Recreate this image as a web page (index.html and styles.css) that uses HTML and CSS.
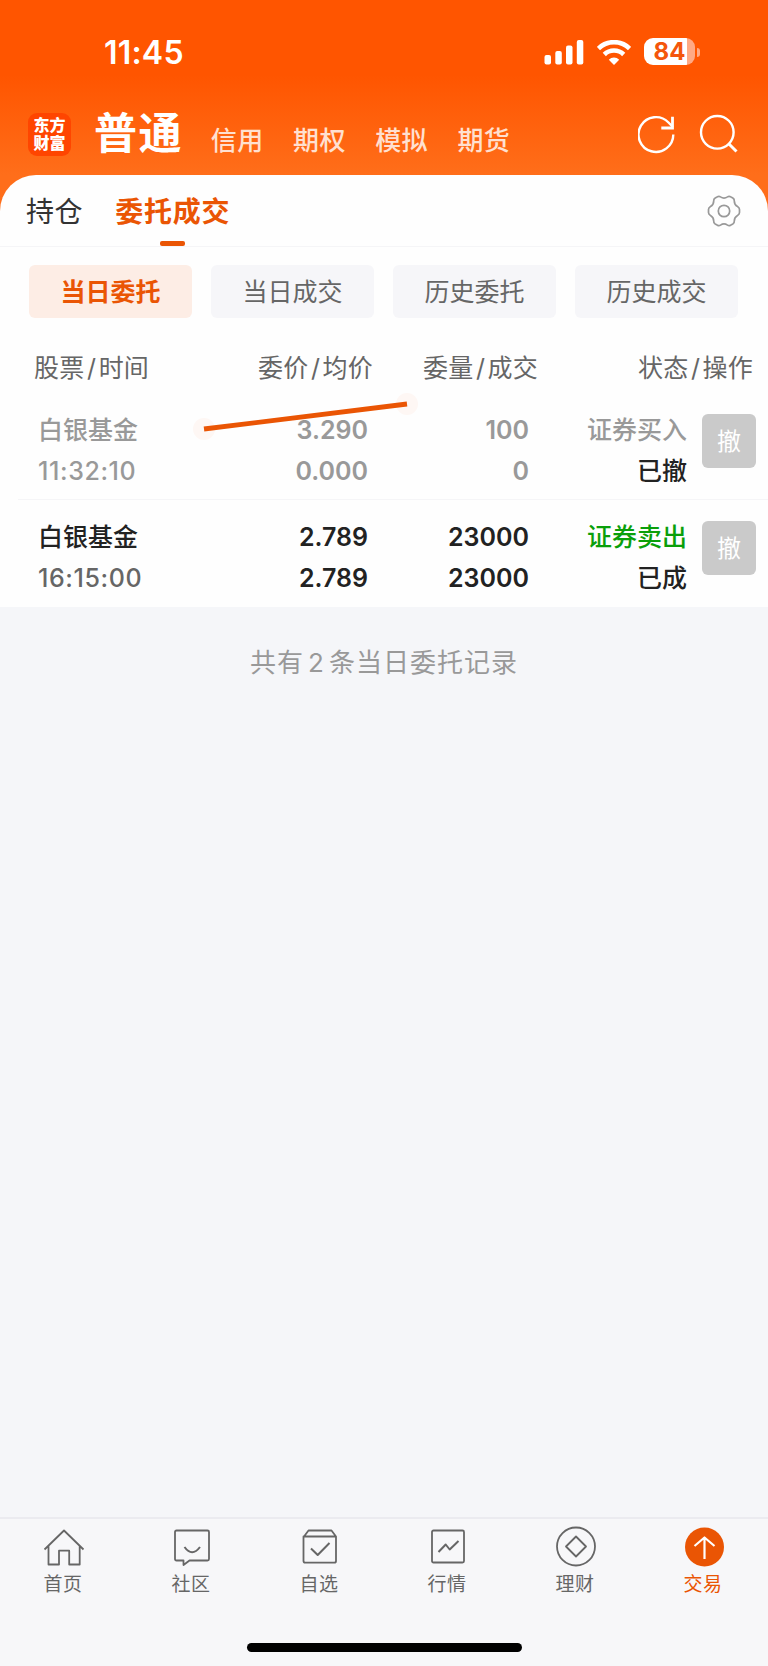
FILE: index.html
```html
<!DOCTYPE html>
<html lang="zh-CN">
<head>
    <meta charset="UTF-8">
    <meta name="viewport" content="width=device-width, initial-scale=1.0">
    <title>委托成交</title>
    <link rel="stylesheet" href="styles.css">
</head>
<body>
    <div class="page">
        <div class="top">
            <div class="status-bar">
                <span class="time">11:45</span>
                <div class="status-icons">
                    <svg class="signal" width="40" height="25" viewBox="0 0 40 25" fill="#fff">
                        <rect x="0.5" y="15" width="6.5" height="9.5" rx="2"/>
                        <rect x="11.3" y="11" width="6.5" height="13.5" rx="2"/>
                        <rect x="22" y="5.5" width="6.5" height="19" rx="2"/>
                        <rect x="32.8" y="0" width="6.5" height="24.5" rx="2"/>
                    </svg>
                    <svg class="wifi" width="34" height="25" viewBox="0 0 34 25" fill="none" stroke="#fff" stroke-width="4.6">
                        <path d="M1.4 8.5a22.3 22.3 0 0 1 31.2 0"/>
                        <path d="M7.3 14.5a13.9 13.9 0 0 1 19.4 0"/>
                        <path d="M17 25l-5.2-5.3a7.4 7.4 0 0 1 10.4 0z" fill="#fff" stroke="none"/>
                    </svg>
                    <div class="battery"><span>84</span></div>
                    <i class="battery-tip"></i>
                </div>
            </div>
            <div class="nav">
                <div class="logo">东方<br>财富</div>
                <h1>普通</h1>
                <div class="nav-links">
                    <span>信用</span>
                    <span>期权</span>
                    <span>模拟</span>
                    <span>期货</span>
                </div>
                <svg class="nav-icons" width="102" height="42" viewBox="0 0 102 42" fill="none" stroke="#fff" stroke-width="2.4">
                    <path d="M35.3 21.5A17.4 17.4 0 1 1 30.500 9.500L34.800 14"/>
                    <path d="M34.500 3.800v11.200H23.300" stroke-width="2.8"/>
                    <circle cx="79.3" cy="19.3" r="16.3"/>
                    <path d="M90.500 30.500l8 8" stroke-width="3"/>
                </svg>
            </div>
        </div>

        <div class="card">
            <div class="tabs">
                <span class="tab">持仓</span>
                <span class="tab active">委托成交</span>
                <svg class="gear" width="36" height="36" viewBox="-18 -18 36 36" fill="none" stroke="#999" stroke-width="1.7" stroke-linejoin="round">
                    <path d="M-6.500 -14.200Q-5 -15.200 -3.500 -14.100Q0 -11.800 3.500 -14.100Q5 -15.200 6.500 -14.200L8.800 -13Q10.500 -12 10.300 -10Q10.300 -6.200 13.500 -4.400Q15.500 -3.200 15.500 -1.500V1.500Q15.500 3.200 13.500 4.400Q10.300 6.200 10.300 10Q10.500 12 8.800 13L6.500 14.200Q5 15.200 3.500 14.100Q0 11.800 -3.500 14.100Q-5 15.200 -6.500 14.200L-8.800 13Q-10.500 12 -10.300 10Q-10.300 6.200 -13.500 4.400Q-15.500 3.200 -15.500 1.500V-1.500Q-15.500 -3.200 -13.500 -4.400Q-10.300 -6.200 -10.300 -10Q-10.500 -12 -8.800 -13Z"/>
                    <circle r="5.700"/>
                </svg>
            </div>

            <div class="filters">
                <button class="active">当日委托</button>
                <button>当日成交</button>
                <button>历史委托</button>
                <button>历史成交</button>
            </div>

            <div class="table-head">
                <span>股票<i>/</i>时间</span>
                <span>委价<i>/</i>均价</span>
                <span>委量<i>/</i>成交</span>
                <span>状态<i>/</i>操作</span>
            </div>

            <div class="orders">
                <div class="order cancelled">
                    <div class="cell stock"><b>白银基金</b><span class="clock">11:32:10</span></div>
                    <div class="cell"><b>3.290</b><b>0.000</b></div>
                    <div class="cell"><b>100</b><b>0</b></div>
                    <div class="cell state"><b>证券买入</b><b class="result">已撤</b></div>
                    <button>撤</button>
                </div>
                <div class="order">
                    <div class="cell stock"><b>白银基金</b><span class="clock">16:15:00</span></div>
                    <div class="cell"><b>2.789</b><b>2.789</b></div>
                    <div class="cell"><b>23000</b><b>23000</b></div>
                    <div class="cell state"><b class="sell">证券卖出</b><b class="result">已成</b></div>
                    <button>撤</button>
                </div>
                <!-- line drawn over the first order -->
                <svg class="mark" width="240" height="60" viewBox="0 0 240 60">
                    <circle cx="14" cy="43" r="11" fill="#fef7f4"/>
                    <circle cx="217" cy="18" r="11" fill="#fef7f4"/>
                    <path d="M14 43L217 18" stroke="#ea5504" stroke-width="4.8"/>
                </svg>
            </div>
        </div>

        <p class="summary">共有<span>2</span>条当日委托记录</p>

        <div class="tabbar">
            <div class="item">
                <svg width="42" height="42" viewBox="0 0 42 42">
                    <path d="M1.5 22.5L21 3.5l19.5 19M5.5 19v18.5H16V23.7h10.2v13.8h10.5V19"/>
                </svg>
                <span>首页</span>
            </div>
            <div class="item">
                <svg width="42" height="42" viewBox="0 0 42 42">
                    <path d="M5.5 3.5h31q1.5 0 1.5 1.5v27q0 1.5-1.5 1.5H18.500l-6 4.500v-4.500h-7Q4 33.500 4 32V5q0-1.500 1.500-1.500z"/>
                    <path d="M13.500 20q7.500 10.500 15.500 0" stroke-width="2"/>
                </svg>
                <span>社区</span>
            </div>
            <div class="item">
                <svg width="42" height="42" viewBox="0 0 42 42">
                    <path d="M5 9.500L9.500 3.500h23L37 9.500V34q0 1.700-1.700 1.700H6.200q-1.700 0-1.700-1.700V9.500H37"/>
                    <path d="M12 21.500l6.700 6.500L30.500 16" stroke-width="2"/>
                </svg>
                <span>自选</span>
            </div>
            <div class="item">
                <svg width="42" height="42" viewBox="0 0 42 42">
                    <rect x="5" y="3.5" width="32" height="32" rx="1.5"/>
                    <path d="M11.500 25l7.200-7.500 4 5L31.500 14" stroke-width="2"/>
                </svg>
                <span>行情</span>
            </div>
            <div class="item">
                <svg width="42" height="42" viewBox="0 0 42 42">
                    <circle cx="21" cy="19.5" r="19"/>
                    <path d="M21 9.500L31 19.500 21 29.500 11 19.500z"/>
                </svg>
                <span>理财</span>
            </div>
            <div class="item active">
                <svg width="42" height="42" viewBox="0 0 42 42">
                    <circle class="disc" cx="21.5" cy="20" r="19.5"/>
                    <path class="arrow" d="M21.500 32V11M11.500 19l10-8.500 10 8.500"/>
                </svg>
                <span>交易</span>
            </div>
        </div>
        <div class="home-bar"></div>
    </div>
</body>
</html>
```
FILE: styles.css
```css
* {
    box-sizing: border-box;
}

body {
    margin: 0;
    font-family: Inter, "Noto Sans CJK SC", sans-serif;
    background: #f5f6f9;
    color: #222;
}

.page {
    width: 768px;
    height: 1666px;
    display: flex;
    flex-direction: column;
    overflow: hidden;
    background: linear-gradient(#ff5500 0, #ff5500 75px, #ff6e1a 175px, #ff6e1a 230px, #f5f6f9 230px);
}

i {
    font-style: normal;
}

button {
    border: none;
    padding: 0;
    font-family: inherit;
}

/* header */
.top {
    height: 175px;
    color: #fff;
}

.status-bar {
    height: 104px;
    padding: 0 68px 0 104px;
    display: flex;
    align-items: center;
    justify-content: space-between;
}

.time {
    padding-top: 2px;
    font-size: 32px;
    font-weight: 600;
    line-height: 40px;
    letter-spacing: 0.2px;
}

.status-icons {
    display: flex;
    align-items: center;
}

.wifi {
    margin: 0 13px;
}

.battery {
    width: 51px;
    height: 27px;
    margin-top: -1px;
    border-radius: 9px;
    background: linear-gradient(to right, #fff 43px, #ffa984 43px);
    color: #f4560b;
    font-size: 24px;
    font-weight: 700;
    line-height: 27px;
    text-align: center;
}

.battery-tip {
    width: 3px;
    height: 9px;
    margin-left: 2px;
    border-radius: 0 5px 5px 0;
    background: #ffa984;
}

.nav {
    height: 71px;
    padding: 0 28px;
    display: flex;
    align-items: flex-start;
}

.logo {
    width: 43px;
    height: 43px;
    margin-top: 9px;
    padding-top: 3px;
    border-radius: 9px;
    background: #ff4500;
    font-size: 16px;
    font-weight: 900;
    line-height: 18px;
    text-align: center;
}

.nav h1 {
    margin: -1px 0 0 23px;
    font-size: 43px;
    font-weight: 700;
    line-height: 60px;
    letter-spacing: 1.4px;
}

.nav-links {
    display: flex;
    gap: 29.4px;
    margin: 17px 0 0 28px;
    font-size: 26px;
    font-weight: 500;
    line-height: 40px;
    letter-spacing: 0.4px;
    color: #ffe0d0;
}

.nav-icons {
    margin: 9px 0 0 auto;
}

/* card */
.card {
    background: #fefefe;
    border-radius: 36px 36px 0 0;
}

.tabs {
    height: 72px;
    padding: 0 26px;
    display: flex;
    border-bottom: 1px solid #f5f5f7;
}

.tab {
    margin-right: 32px;
    font-size: 28px;
    line-height: 74px;
    letter-spacing: 0.6px;
    color: #333;
}

.tab.active {
    display: flex;
    flex-direction: column;
    align-items: center;
    color: #ea5504;
    font-weight: 600;
    letter-spacing: 0.8px;
}

.tab.active::after {
    content: "";
    width: 25px;
    height: 5px;
    margin-top: -8px;
    border-radius: 2px;
    background: #ea5504;
}

.gear {
    margin: 18px 0 0 auto;
}

.filters {
    padding: 18px 30px 0 29px;
    display: flex;
    justify-content: space-between;
}

.filters button {
    width: 163px;
    height: 53px;
    padding-top: 2px;
    border-radius: 6px;
    background: #f6f6f9;
    color: #666;
    font-size: 25px;
    line-height: 51px;
}

.filters .active {
    background: #fdede5;
    color: #ea5504;
    font-weight: 700;
}

.table-head {
    height: 75px;
    padding: 30px 15px 0 34px;
    display: grid;
    grid-template-columns: 160px 179px 165px 215px;
    font-size: 25px;
    line-height: 40px;
    letter-spacing: 0.2px;
    text-align: right;
    color: #666;
}

.table-head span:first-child {
    text-align: left;
}

.table-head i {
    padding: 0 2.5px;
}

.orders {
    position: relative;
}

.order {
    height: 107px;
    margin-left: 18px;
    padding: 17px 12px 0 20px;
    display: grid;
    grid-template-columns: 160px 170px 161px 158px 54px;
    border-bottom: 1px solid #f5f5f7;
}

.order:nth-child(2) {
    border-bottom: none;
}

.cell {
    display: flex;
    flex-direction: column;
    text-align: right;
    font-size: 25px;
    line-height: 41px;
}

.cell b {
    font-weight: 600;
}

.stock b,
.state b {
    font-weight: 500;
}

.stock {
    text-align: left;
}

.clock {
    color: #666;
    font-weight: 500;
    letter-spacing: 0.6px;
}

.cancelled,
.cancelled .clock {
    color: #999;
}

.state .result {
    color: #222;
}

.sell {
    color: #0a9f0a;
}

.order button {
    width: 54px;
    height: 54px;
    margin: 4px 0 0 15px;
    padding-top: 2px;
    border-radius: 6px;
    background: #cacaca;
    color: #fff;
    font-size: 24px;
    line-height: 52px;
}

.mark {
    position: absolute;
    left: 190px;
    top: -7px;
}

.summary {
    margin: 36px 0 0;
    font-size: 26px;
    line-height: 40px;
    letter-spacing: 1px;
    text-align: center;
    color: #999;
}

.summary span {
    padding: 0 4px;
}

/* bottom navigation */
.tabbar {
    height: 126px;
    margin-top: auto;
    padding-top: 8px;
    display: grid;
    grid-template-columns: repeat(6, 1fr);
    border-top: 2px solid #ebebf0;
    background: #f7f7f9;
}

.item {
    display: flex;
    flex-direction: column;
    align-items: center;
    font-size: 19px;
    line-height: 28px;
    letter-spacing: 0.6px;
    color: #666;
}

.item span {
    margin: 2px 2px 0 0;
}

.item svg {
    fill: none;
    stroke: #666;
    stroke-width: 1.8;
    stroke-linejoin: round;
    overflow: visible;
}

.item.active {
    color: #ea5504;
}

.item .disc {
    fill: #ea5504;
    stroke: none;
}

.item .arrow {
    stroke: #fff;
    stroke-width: 2.2;
}

.home-bar {
    height: 23px;
    background: #f7f7f9;
    display: flex;
    justify-content: center;
}

.home-bar::after {
    content: "";
    width: 275px;
    height: 9px;
    border-radius: 5px;
    background: #000;
}
```
